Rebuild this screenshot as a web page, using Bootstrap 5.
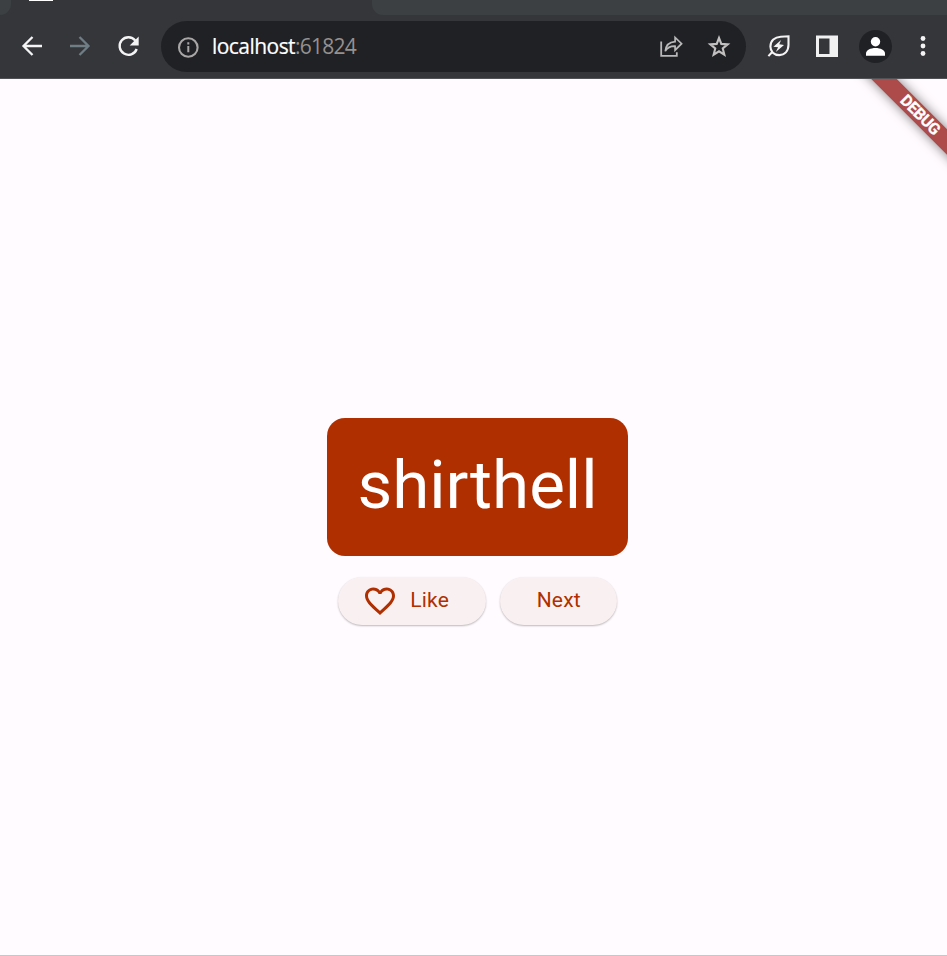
<!DOCTYPE html>
<html lang="en">
<head>
<meta charset="utf-8">
<meta name="viewport" content="width=device-width, initial-scale=1">
<title>localhost:61824</title>
<link href="https://cdn.jsdelivr.net/npm/bootstrap@5.3.0/dist/css/bootstrap.min.css" rel="stylesheet">
<style>
body{background:#fffbff;font-family:Roboto,"Liberation Sans",sans-serif}
.tabstrip{height:15px;background:#3c4043}
.tab-prev{width:11px;background:#3c4043;border-bottom-right-radius:11px}
.tab-active{width:372px;background:#35363a}
.tab-icon{width:24px;height:1px;margin-left:18px;background:#fff}
.tab-rest{background:#3c4043;border-bottom-left-radius:11px}
.tab-rest-wrap{background:#35363a}
.toolbar{height:64px;background:#35363a;border-bottom:1px solid #505256;padding:6px 12px 6px 20px}
.tool{width:24px;height:24px;border:0;background:none;padding:0;display:block;flex:none;margin-bottom:2px}
.tool svg,.icon{display:block;width:24px;height:24px}
.omnibox{width:585px;height:51px;background:#202124;border-radius:26px;margin-left:21px;padding:0 15px}
.omnibox .tool{margin-bottom:1px}
.url{font:21px/28px "Open Sans","Noto Sans",sans-serif;letter-spacing:-.55px;margin:0 0 2px 12px;color:#fff;-webkit-text-stroke:.2px #fff}
.url .port{color:#96908e;letter-spacing:-.75px;-webkit-text-stroke:0}
.avatar{width:33px;height:33px;background:#202124;margin:0 0 1px 20px}
.menu-btn{margin-left:19px}
.stage{height:877px;border-bottom:1px solid #c8c6ca;padding-left:8px}
.ribbon{width:170px;height:18px;left:835px;top:27px;transform:rotate(45deg);background:#ad4a4a;box-shadow:0 0 12px rgba(0,0,0,.5);color:#fff;font-size:16px;font-weight:700;line-height:18.5px;letter-spacing:-.45px;-webkit-text-stroke:.3px #fff}
.word-card{width:301px;height:138px;border-radius:18px;background:#b02f00;color:#fff;font-size:67.3px;line-height:1;border:0;margin-top:338.5px;padding-bottom:1px}
.pill{height:48px;border-radius:24px;background:#f9f0f1;color:#b02f00;font-size:21px;font-weight:400;letter-spacing:.2px;border:0;box-shadow:0 1px 2px rgba(0,0,0,.27)}
.pill:hover{background:#f5e9ea;color:#b02f00}
.pill-text{padding-top:1px}
.pill-like{width:148px}
.pill-next{width:117px}
.heart{margin:0 12px 0 24.5px}
.actions{gap:14.5px;margin-top:21px}
</style>
<script src="https://cdn.jsdelivr.net/npm/bootstrap@5.3.0/dist/js/bootstrap.bundle.min.js"></script>
</head>
<body class="overflow-hidden">
<header>
  <div class="tabstrip d-flex">
    <div class="tab-active d-flex"><div class="tab-prev"></div><div class="tab-icon"></div></div>
    <div class="tab-rest-wrap flex-grow-1 d-flex"><div class="tab-rest flex-grow-1"></div></div>
  </div>
  <nav class="toolbar d-flex align-items-center">
    <div class="d-flex gap-4">
      <button class="tool" aria-label="Back"><svg viewBox="0 0 24 24" fill="none" stroke="#f4f4f4" stroke-width="2.3"><path d="M22 12H3.500M12.500 3 3.500 12l9 9"/></svg></button>
      <button class="tool" aria-label="Forward"><svg viewBox="0 0 24 24" fill="none" stroke="#6f7d84" stroke-width="2.3"><path d="M2 12h18.500M11.500 3l9 9-9 9"/></svg></button>
      <button class="tool" aria-label="Reload"><svg viewBox="0 0 24 24"><path d="M19.300 6.500A8.800 8.800 0 1 0 20.700 15" fill="none" stroke="#f4f4f4" stroke-width="2.400"/><path d="M22.700 2.500v9h-9z" fill="#f4f4f4"/></svg></button>
    </div>
    <div class="omnibox d-flex align-items-center">
      <svg class="icon" viewBox="0 0 24 24"><circle cx="12.300" cy="12.500" r="9.300" fill="none" stroke="#a9a7a6" stroke-width="2.100"/><path d="M11.300 7.200h2v2.200h-2zm0 3.800h2v6.300h-2z" fill="#a9a7a6"/></svg>
      <div class="url">localhost<span class="port">:61824</span></div>
      <div class="d-flex gap-4 ms-auto">
        <button class="tool" aria-label="Share"><svg viewBox="0 0 24 24" fill="none" stroke="#b9b9b9" stroke-width="1.800"><path d="M2.200 7.500v14.300h15.600v-3.600"/><path d="M6.300 17.200c.5-6 3.800-9.200 9.800-9.600V3.400l6.500 6.300-6.500 6.500v-4c-4.800-.2-7.800 1.500-9.800 5z" stroke-width="1.700"/></svg></button>
        <button class="tool" aria-label="Bookmark"><svg viewBox="0 0 24 24" fill="none" stroke="#c3c1c0" stroke-width="2.100"><path d="m12 4 2.300 5.900 6.400.450-4.950 4.100 1.600 6.200L12 17.300l-5.350 3.350 1.600-6.200L3.300 10.350l6.400-.450z"/></svg></button>
      </div>
    </div>
    <div class="d-flex align-items-center ms-auto">
      <button class="tool" aria-label="Energy saver"><svg viewBox="0 0 24 24"><path d="M21.500 2.300v8.500c0 6.500-4 10.300-9.200 10.300-5.400 0-8.900-3.700-8.900-8.500 0-5.900 4.300-9.600 10.300-9.900zM5 18.300 1.400 22.100" fill="none" stroke="#f4f4f4" stroke-width="2.100"/><path d="m14.100 6.100-7.700 6.600 4.700.6-2.300 4.600 8.200-7-4.700-.6z" fill="#f4f4f4"/></svg></button>
      <button class="tool ms-4" aria-label="Side panel"><svg viewBox="0 0 24 24"><path fill="#f1f1f1" fill-rule="evenodd" d="M1 1.500h22V23H1zm3 3V20h10.500V4.500z"/></svg></button>
      <button class="avatar rounded-circle border-0 p-0 d-flex align-items-center justify-content-center" aria-label="Profile"><svg width="33" height="33" viewBox="0 0 33 33" fill="#fff"><circle cx="16.500" cy="11.800" r="4.700"/><path d="M7 25.800v-2.300c0-3.200 4.500-5.400 9.500-5.400s9.500 2.200 9.500 5.400v2.300z"/></svg></button>
      <button class="tool menu-btn" aria-label="Menu"><svg viewBox="0 0 24 24" fill="#f4f4f4"><circle cx="12" cy="4.500" r="2.400"/><circle cx="12" cy="12" r="2.400"/><circle cx="12" cy="19.500" r="2.400"/></svg></button>
    </div>
  </nav>
</header>
<main class="stage position-relative overflow-hidden d-flex flex-column align-items-center">
  <div class="ribbon position-absolute text-center">DEBUG</div>
  <div class="word-card card align-items-center justify-content-center">shirthell</div>
  <div class="actions d-flex">
    <button class="pill pill-like btn d-flex align-items-center p-0"><svg class="heart" width="36" height="36" viewBox="0 0 24 24" fill="#b02f00"><path d="M16.500 3c-1.740 0-3.410.81-4.500 2.090C10.910 3.810 9.240 3 7.500 3 4.420 3 2 5.420 2 8.500c0 3.780 3.400 6.860 8.550 11.540L12 21.350l1.450-1.320C18.600 15.360 22 12.280 22 8.500 22 5.420 19.580 3 16.500 3zm-4.400 15.550-.1.100-.1-.1C7.140 14.240 4 11.390 4 8.500 4 6.500 5.500 5 7.500 5c1.540 0 3.040.99 3.570 2.360h1.870C13.460 5.990 14.960 5 16.500 5c2 0 3.500 1.500 3.500 3.500 0 2.890-3.140 5.740-7.900 10.050z"/></svg><span class="pill-text">Like</span></button>
    <button class="pill pill-next btn p-0 d-flex align-items-center justify-content-center"><span class="pill-text">Next</span></button>
  </div>
</main>
</body>
</html>
